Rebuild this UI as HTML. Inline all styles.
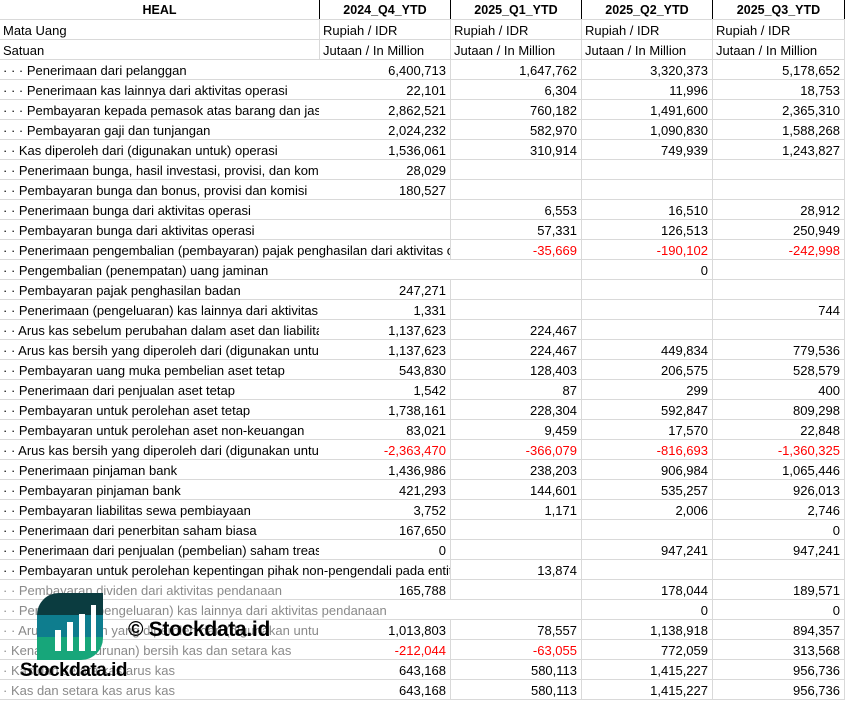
<!DOCTYPE html>
<html><head><meta charset="utf-8"><style>
*{margin:0;padding:0;box-sizing:border-box}
body{width:845px;height:701px;background:#fff;font-family:"Liberation Sans",sans-serif;font-size:13px;color:#000;position:relative;overflow:hidden}
.r{position:absolute;left:0;width:845px;height:20px;border-bottom:1px solid #d9d9d9}
.c{position:absolute;top:0;height:19px;line-height:21px;white-space:nowrap;overflow:hidden;border-right:1px solid #d9d9d9}
.l{left:0;width:320px;padding-left:3px}
.v{text-align:right;padding-right:4px;width:131px}
.v1{left:320px}.v2{left:451px}.v3{left:582px}.v4{left:713px;width:132px}
.t{padding-left:3px;text-align:left}
.h .c{font-weight:bold;text-align:center;border-right:1px solid #000;padding:0;font-size:12.5px}
.neg{color:#f00}
.g{color:#8a8a8a}
.ov{position:absolute;top:0;height:19px;line-height:21px;white-space:nowrap;overflow:hidden;padding-left:3px;left:0}
</style></head><body>
<div id="rows"></div>
<script>
const rows=[
["· · · Penerimaan dari pelanggan","6,400,713","1,647,762","3,320,373","5,178,652"],
["· · · Penerimaan kas lainnya dari aktivitas operasi","22,101","6,304","11,996","18,753"],
["· · · Pembayaran kepada pemasok atas barang dan jasa","2,862,521","760,182","1,491,600","2,365,310"],
["· · · Pembayaran gaji dan tunjangan","2,024,232","582,970","1,090,830","1,588,268"],
["· · Kas diperoleh dari (digunakan untuk) operasi","1,536,061","310,914","749,939","1,243,827"],
["· · Penerimaan bunga, hasil investasi, provisi, dan komisi","28,029","","",""],
["· · Pembayaran bunga dan bonus, provisi dan komisi","180,527","","",""],
["· · Penerimaan bunga dari aktivitas operasi","","6,553","16,510","28,912"],
["· · Pembayaran bunga dari aktivitas operasi","","57,331","126,513","250,949"],
["· · Penerimaan pengembalian (pembayaran) pajak penghasilan dari aktivitas operasi","","-35,669","-190,102","-242,998"],
["· · Pengembalian (penempatan) uang jaminan","","","0",""],
["· · Pembayaran pajak penghasilan badan","247,271","","",""],
["· · Penerimaan (pengeluaran) kas lainnya dari aktivitas operasi","1,331","","","744"],
["· · Arus kas sebelum perubahan dalam aset dan liabilitas operasi","1,137,623","224,467","",""],
["· · Arus kas bersih yang diperoleh dari (digunakan untuk) aktivitas operasi","1,137,623","224,467","449,834","779,536"],
["· · Pembayaran uang muka pembelian aset tetap","543,830","128,403","206,575","528,579"],
["· · Penerimaan dari penjualan aset tetap","1,542","87","299","400"],
["· · Pembayaran untuk perolehan aset tetap","1,738,161","228,304","592,847","809,298"],
["· · Pembayaran untuk perolehan aset non-keuangan","83,021","9,459","17,570","22,848"],
["· · Arus kas bersih yang diperoleh dari (digunakan untuk) aktivitas investasi","-2,363,470","-366,079","-816,693","-1,360,325"],
["· · Penerimaan pinjaman bank","1,436,986","238,203","906,984","1,065,446"],
["· · Pembayaran pinjaman bank","421,293","144,601","535,257","926,013"],
["· · Pembayaran liabilitas sewa pembiayaan","3,752","1,171","2,006","2,746"],
["· · Penerimaan dari penerbitan saham biasa","167,650","","","0"],
["· · Penerimaan dari penjualan (pembelian) saham treasuri","0","","947,241","947,241"],
["· · Pembayaran untuk perolehan kepentingan pihak non-pengendali pada entitas anak","","13,874","",""],
["· · Pembayaran dividen dari aktivitas pendanaan","165,788","","178,044","189,571"],
["· · Penerimaan (pengeluaran) kas lainnya dari aktivitas pendanaan","","","0","0"],
["· · Arus kas bersih yang diperoleh dari (digunakan untuk) aktivitas pendanaan","1,013,803","78,557","1,138,918","894,357"],
["· Kenaikan (penurunan) bersih kas dan setara kas","-212,044","-63,055","772,059","313,568"],
["· Kas dan setara kas arus kas","643,168","580,113","1,415,227","956,736"],
["· Kas dan setara kas arus kas","643,168","580,113","1,415,227","956,736"]];
let h='<div class="r h" style="top:0"><div class="c l" style="padding:0">HEAL</div><div class="c v v1">2024_Q4_YTD</div><div class="c v v2">2025_Q1_YTD</div><div class="c v v3">2025_Q2_YTD</div><div class="c v v4">2025_Q3_YTD</div></div>';
h+='<div class="r" style="top:20px"><div class="c l">Mata Uang</div>'+[1,2,3,4].map(i=>'<div class="c v t v'+i+'">Rupiah / IDR</div>').join('')+'</div>';
h+='<div class="r" style="top:40px"><div class="c l">Satuan</div>'+[1,2,3,4].map(i=>'<div class="c v t v'+i+'">Jutaan / In Million</div>').join('')+'</div>';
rows.forEach((r,k)=>{
 const top=60+k*20; const gray=k>=26;
 let w=320; let j=1; while(j<=4&&r[j]===''){w+= (j==4?132:131); j++;}
 let s='<div class="r" style="top:'+top+'px">';
 for(let i=1;i<=4;i++){s+='<div class="c v v'+i+(r[i].startsWith('-')?' neg':'')+'">'+r[i]+'</div>';}
 s+='<div class="ov'+(gray?' g':'')+'" style="width:'+(w-1)+'px;background:#fff">'+r[0]+'</div>';
 s+='</div>';h+=s;});
document.getElementById('rows').innerHTML=h;
</script>
<svg style="position:absolute;left:37px;top:593px" width="66" height="67" viewBox="0 0 66 67">
<defs><clipPath id="lf"><path d="M22 0H66V45A22 22 0 0 1 44 67H0V22A22 22 0 0 1 22 0Z"/></clipPath></defs>
<g clip-path="url(#lf)"><rect width="66" height="22" fill="#0b3c40"/><rect y="22" width="66" height="22" fill="#0e7d8e"/><rect y="44" width="66" height="23" fill="#17a67a"/></g>
<rect x="18" y="37" width="6" height="21" fill="#fff"/><rect x="30" y="29" width="6" height="29" fill="#fff"/><rect x="42" y="21" width="6" height="37" fill="#fff"/><rect x="54" y="12" width="5" height="46" fill="#fff"/>
</svg>
<div style="position:absolute;left:20px;top:660px;font-weight:bold;font-size:19px;letter-spacing:-0.5px">Stockdata.id</div>
<div style="position:absolute;left:128px;top:618px;font-weight:bold;font-size:21px;letter-spacing:-0.3px">© Stockdata.id</div>
</body></html>
